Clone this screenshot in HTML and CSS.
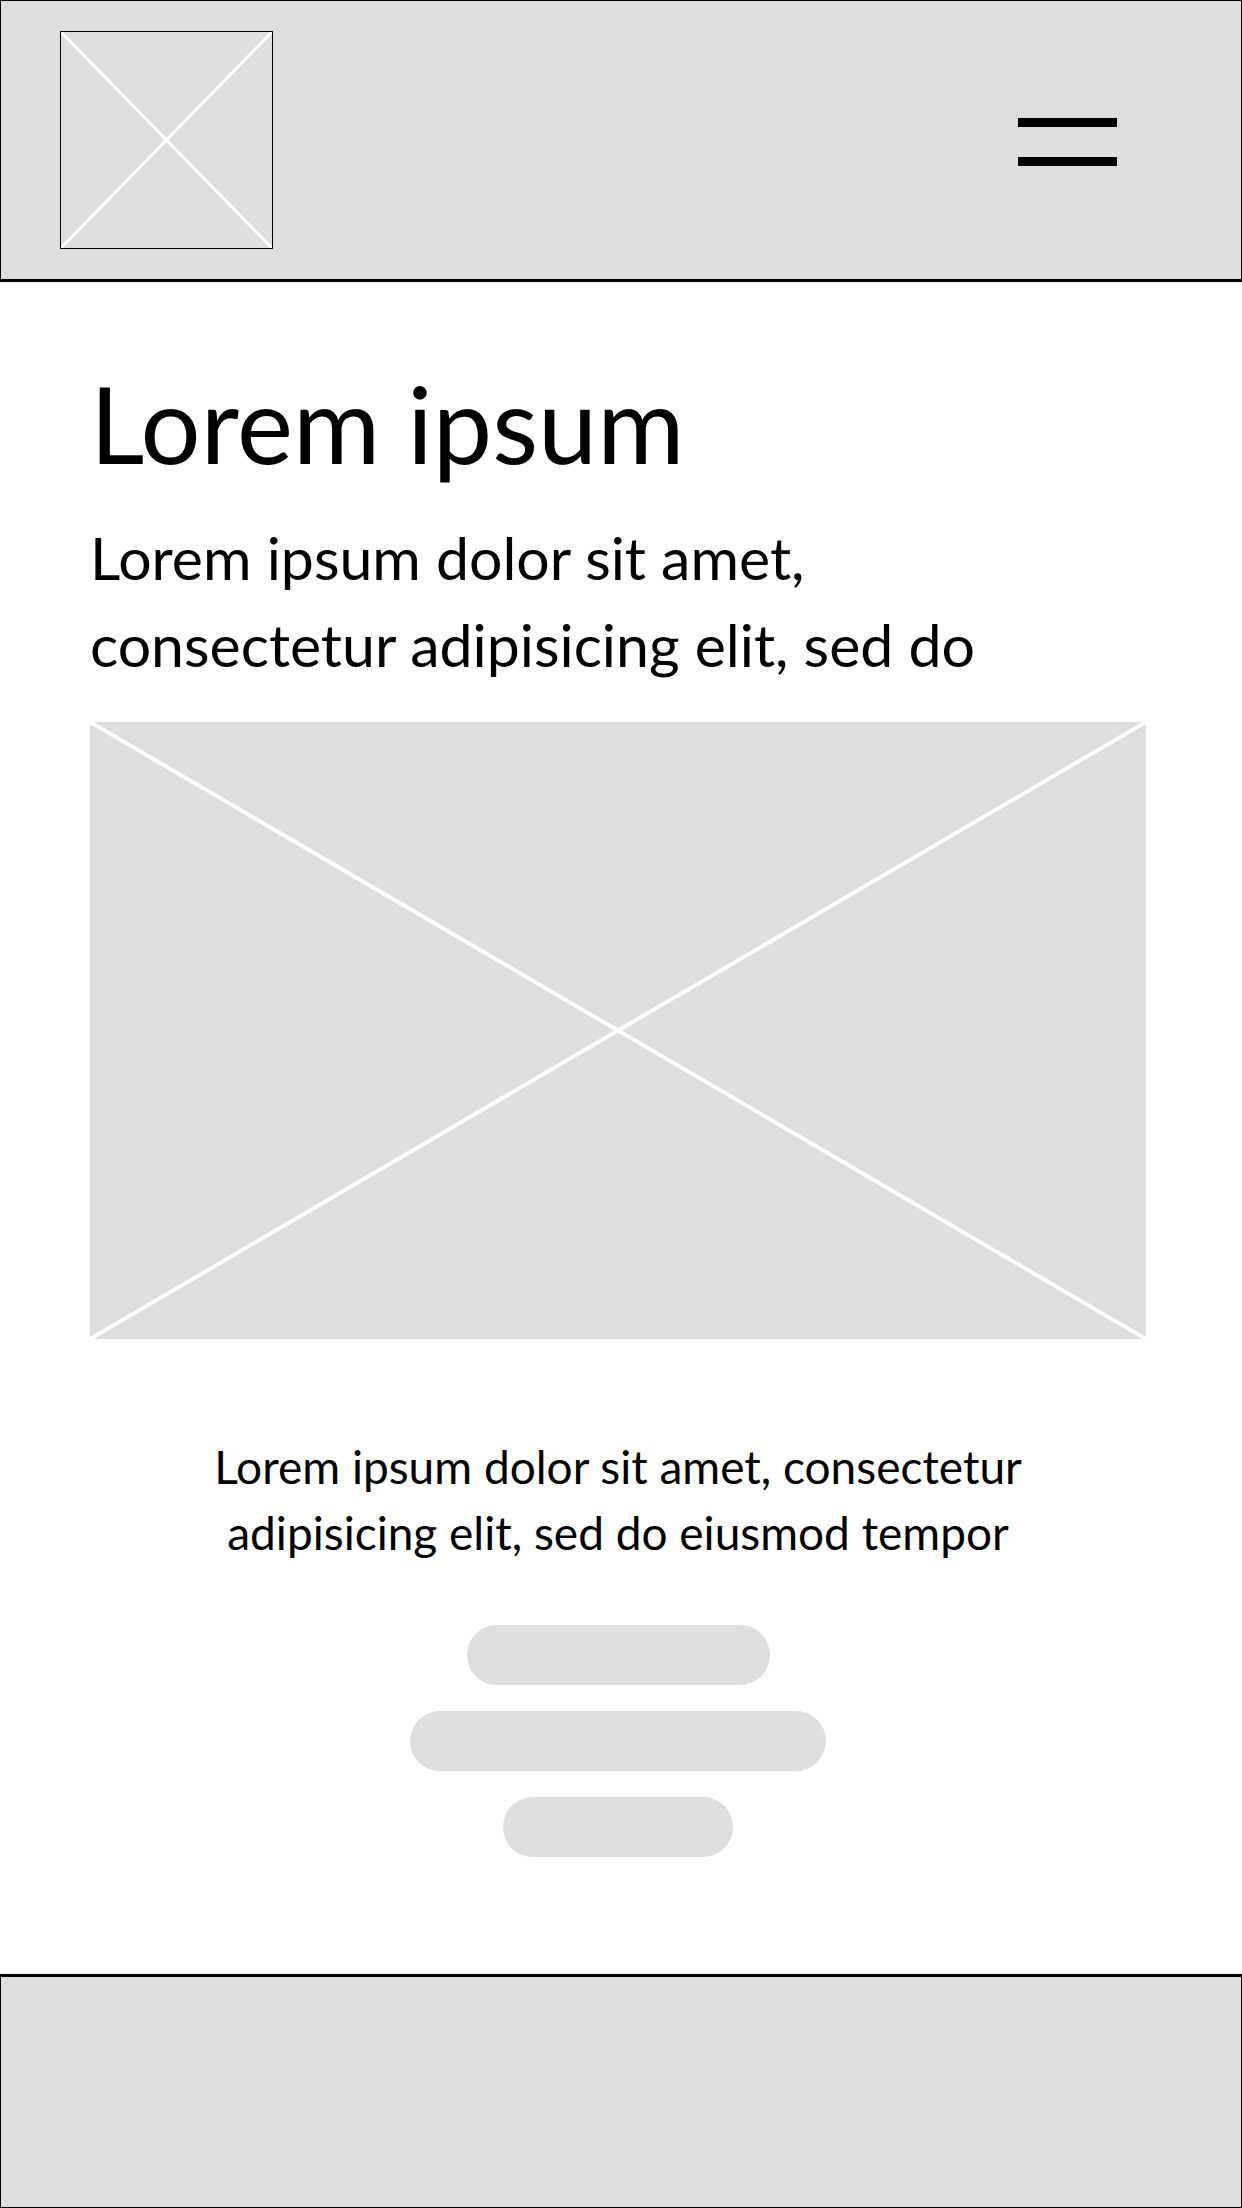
FILE: index.html
```html
<!DOCTYPE html>
<html lang="en">
<head>
<meta charset="utf-8">
<title>Wireframe</title>
<link rel="stylesheet" href="styles.css">
</head>
<body>
<header class="site-header">
  <div class="logo">
    <svg class="x-lines" viewBox="0 0 100 100" preserveAspectRatio="none">
      <line x1="0" y1="0" x2="100" y2="100" vector-effect="non-scaling-stroke"/>
      <line x1="100" y1="0" x2="0" y2="100" vector-effect="non-scaling-stroke"/>
    </svg>
  </div>
  <button class="menu" aria-label="Menu">
    <span class="bar"></span>
    <span class="bar"></span>
  </button>
</header>
<main class="content">
  <h1 class="title">Lorem ipsum</h1>
  <p class="lead">Lorem ipsum dolor sit amet,<br>consectetur adipisicing elit, sed do</p>
  <div class="hero">
    <svg class="x-lines" viewBox="0 0 100 100" preserveAspectRatio="none">
      <line x1="0" y1="0" x2="100" y2="100" vector-effect="non-scaling-stroke"/>
      <line x1="100" y1="0" x2="0" y2="100" vector-effect="non-scaling-stroke"/>
    </svg>
  </div>
  <p class="body-text">Lorem ipsum dolor sit amet, consectetur<br>adipisicing elit, sed do eiusmod tempor</p>
  <div class="pills">
    <span class="pill pill-md"></span>
    <span class="pill pill-lg"></span>
    <span class="pill pill-sm"></span>
  </div>
</main>
<footer class="site-footer"></footer>
</body>
</html>
```
FILE: styles.css
```css
* { box-sizing: border-box; }
html, body { margin: 0; padding: 0; }
body {
  width: 1242px;
  height: 2208px;
  background: #fff;
  font-family: "Lato", "Noto Sans", sans-serif;
  color: #000;
  display: flex;
  flex-direction: column;
}
.site-header {
  height: 282px;
  background: #dedede;
  border: 1px solid #000;
  border-bottom: 3px solid #000;
  display: flex;
  align-items: flex-start;
  justify-content: space-between;
  padding: 30px 124px 0 59px;
}
.logo {
  width: 213px;
  height: 218px;
  border: 1px solid #000;
  background: #dedede;
}
.x-lines {
  display: block;
  width: 100%;
  height: 100%;
}
.x-lines line {
  stroke: #fff;
  stroke-width: 3;
}
.hero .x-lines line {
  stroke-width: 4;
}
.menu {
  margin-top: 87px;
  width: 99px;
  padding: 0;
  border: 0;
  background: none;
  display: flex;
  flex-direction: column;
  gap: 30px;
}
.bar {
  display: block;
  height: 9px;
  width: 99px;
  background: #000;
}
.content {
  flex: 1;
  padding: 0 96px 0 90px;
  display: flex;
  flex-direction: column;
}
.title {
  margin: 80px 0 0;
  font-size: 106px;
  font-weight: 400;
  line-height: 122px;
}
.lead {
  margin: 30px 0 0;
  font-size: 59px;
  line-height: 87px;
}
.hero {
  margin-top: 34px;
  width: 1056px;
  height: 617px;
  background: #dedede;
}
.body-text {
  margin: 95px 0 0;
  text-align: center;
  font-size: 46px;
  line-height: 66px;
}
.pills {
  margin-top: 59px;
  display: flex;
  flex-direction: column;
  align-items: center;
  gap: 26px;
}
.pill {
  display: block;
  height: 60px;
  border-radius: 30px;
  background: #dedede;
}
.pill-md { width: 303px; }
.pill-lg { width: 416px; }
.pill-sm { width: 230px; }
.site-footer {
  height: 234px;
  background: #dedede;
  border: 1px solid #000;
  border-top: 3px solid #000;
}
```
